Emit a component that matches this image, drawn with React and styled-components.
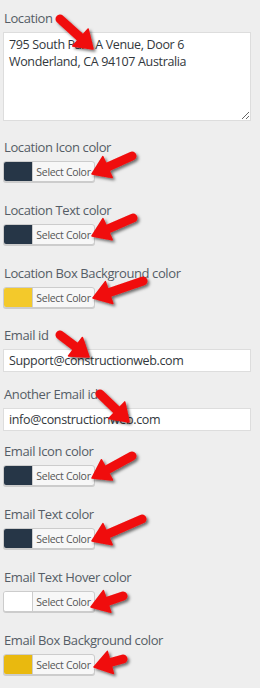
import styled, { createGlobalStyle } from "styled-components";

const GlobalStyle = createGlobalStyle`
  html, body {
    margin: 0;
    padding: 0;
    background: #eeeeee;
  }
  body {
    font-family: "Open Sans", "Noto Sans", sans-serif;
  }
`;

const Page = styled.div`
  position: relative;
  width: 260px;
  height: 688px;
  box-sizing: border-box;
  padding: 9px 9px 0 3px;
  display: flex;
  flex-direction: column;
  background: #eeeeee;
  overflow: hidden;
`;

const Field = styled.div`
  display: flex;
  flex-direction: column;
  align-items: flex-start;
  margin-bottom: ${(p) => p.$gap}px;
`;

const Label = styled.label`
  display: block;
  height: 18px;
  line-height: 18px;
  margin: 0 0 5px 1px;
  font-size: 13px;
  color: #555d66;
  letter-spacing: -0.4px;
  white-space: nowrap;
`;

const TextArea = styled.textarea`
  width: 248px;
  height: 89px;
  box-sizing: border-box;
  margin: 0;
  padding: 3px 5px;
  border: 1px solid #dddddd;
  background: #fff;
  font-family: "Open Sans", "Noto Sans", sans-serif;
  font-size: 12.5px;
  line-height: 17px;
  color: #32373c;
  letter-spacing: -0.35px;
  resize: vertical;
  outline: none;
`;

const TextInput = styled.input`
  width: 248px;
  height: 23px;
  box-sizing: border-box;
  margin: 0;
  padding: 0 5px;
  border: 1px solid #dddddd;
  background: #fff;
  font-family: "Open Sans", "Noto Sans", sans-serif;
  font-size: 12.5px;
  color: #32373c;
  letter-spacing: -0.35px;
  outline: none;
`;

const ColorButton = styled.button`
  display: flex;
  align-items: stretch;
  width: 92px;
  height: 21px;
  box-sizing: border-box;
  margin: 0;
  padding: 0;
  border: 1px solid #cccccc;
  border-radius: 3px;
  background: #f7f7f7;
  box-shadow: 0 1px 0 #cccccc;
  overflow: hidden;
  cursor: pointer;
`;

const Swatch = styled.span`
  width: 28px;
  flex: none;
  background: ${(p) => p.$color};
  border-right: 1px solid #cccccc;
`;

const ButtonText = styled.span`
  flex: 1;
  display: flex;
  align-items: center;
  justify-content: center;
  font-family: "Open Sans", "Noto Sans", sans-serif;
  font-size: 10.5px;
  color: #555555;
  letter-spacing: -0.3px;
`;

const Overlay = styled.svg`
  position: absolute;
  left: 0;
  top: 0;
  pointer-events: none;
`;

const ColorPicker = ({ color }) => (
  <ColorButton type="button">
    <Swatch $color={color} />
    <ButtonText>Select Color</ButtonText>
  </ColorButton>
);

// tail -> tip, arrows drawn on top of the form
const arrows = [
  [60, 19, 93, 49],
  [132, 156, 92, 174],
  [133, 218, 92, 236],
  [143, 281, 93, 298],
  [60, 335, 89, 357],
  [100, 394, 129, 422],
  [132, 456, 92, 478],
  [142, 519, 92, 541],
  [123, 596, 91, 607],
  [123, 659, 94, 667],
];

const Arrow = ({ a }) => {
  const [x1, y1, x2, y2] = a;
  const len = Math.hypot(x2 - x1, y2 - y1);
  const dx = (x2 - x1) / len;
  const dy = (y2 - y1) / len;
  const nx = -dy;
  const ny = dx;
  const hl = 17;
  const hw = 11.5;
  const bx = x2 - dx * hl;
  const by = y2 - dy * hl;
  const head = `${x2},${y2} ${bx + nx * hw},${by + ny * hw} ${bx - nx * hw},${by - ny * hw}`;
  return (
    <g>
      <line
        x1={x1}
        y1={y1}
        x2={bx + dx * 2}
        y2={by + dy * 2}
        stroke="#f00b0b"
        strokeWidth="9"
        strokeLinecap="round"
      />
      <polygon points={head} fill="#f00b0b" stroke="#f00b0b" strokeWidth="1.5" strokeLinejoin="round" />
    </g>
  );
};

export default function App() {
  return (
    <>
      <GlobalStyle />
      <Page>
        <Field $gap={17}>
          <Label>Location</Label>
          <TextArea
            defaultValue={"795 South Park A Venue, Door 6\nWonderland, CA 94107 Australia"}
          />
        </Field>
        <Field $gap={19}>
          <Label>Location Icon color</Label>
          <ColorPicker color="#263647" />
        </Field>
        <Field $gap={19}>
          <Label>Location Text color</Label>
          <ColorPicker color="#263647" />
        </Field>
        <Field $gap={18}>
          <Label>Location Box Background color</Label>
          <ColorPicker color="#f3c92b" />
        </Field>
        <Field $gap={13}>
          <Label>Email id</Label>
          <TextInput defaultValue="Support@constructionweb.com" />
        </Field>
        <Field $gap={11}>
          <Label>Another Email id</Label>
          <TextInput defaultValue="info@constructionweb.com" />
        </Field>
        <Field $gap={19}>
          <Label>Email Icon color</Label>
          <ColorPicker color="#263647" />
        </Field>
        <Field $gap={19}>
          <Label>Email Text color</Label>
          <ColorPicker color="#263647" />
        </Field>
        <Field $gap={19}>
          <Label>Email Text Hover color</Label>
          <ColorPicker color="#ffffff" />
        </Field>
        <Field $gap={0}>
          <Label>Email Box Background color</Label>
          <ColorPicker color="#e9b90f" />
        </Field>
        <Overlay width="260" height="688" viewBox="0 0 260 688">
          <defs>
            <filter id="shadow" x="-20%" y="-20%" width="140%" height="140%">
              <feDropShadow dx="2" dy="2" stdDeviation="1.5" floodColor="#000" floodOpacity="0.55" />
            </filter>
          </defs>
          <g filter="url(#shadow)">
            {arrows.map((a, i) => (
              <Arrow key={i} a={a} />
            ))}
          </g>
        </Overlay>
      </Page>
    </>
  );
}
